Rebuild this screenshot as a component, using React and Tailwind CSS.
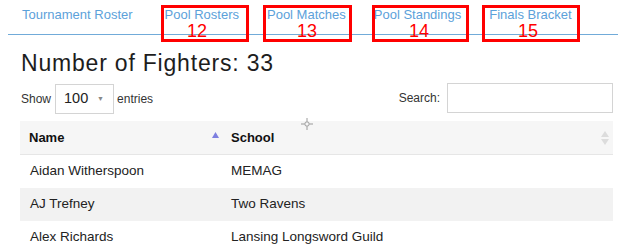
import React from 'react'

const tabs = ['Tournament Roster', 'Pool Rosters', 'Pool Matches', 'Pool Standings', 'Finals Bracket']

// annotation boxes drawn over the tabs
const marks = [
  { n: '12', box: 'left-[161px] w-[88px]', num: 'pl-[23px]' },
  { n: '13', box: 'left-[263px] w-[89px]', num: 'pl-[31px]' },
  { n: '14', box: 'left-[372px] w-[97px]', num: 'pl-[34px]' },
  { n: '15', box: 'left-[482px] w-[98px]', num: 'pl-[33px]' },
]

const rows = [
  { name: 'Aidan Witherspoon', school: 'MEMAG' },
  { name: 'AJ Trefney', school: 'Two Ravens' },
  { name: 'Alex Richards', school: 'Lansing Longsword Guild' },
]

export default function App() {
  return (
    <div className="relative w-[618px] h-[245px] overflow-hidden bg-white text-[#222] font-['Liberation_Sans',Arial,sans-serif]">
      {/* Tabs */}
      <div className="ml-[8px] flex h-[35px] items-start border-b border-[#71abd9]">
        {tabs.map((t, i) => (
          <div key={t} className={`pl-[14px] pt-[8px] text-[13px] leading-[14px] text-[#5ca1da] ${i === 0 ? 'pr-[18px]' : 'pr-[14px]'}`}>
            {t}
          </div>
        ))}
      </div>

      {marks.map(m => (
        <div key={m.n} className={`absolute top-[5px] h-[37px] border-[3px] border-[#ff0000] ${m.box}`}>
          <div className={`${m.num} pt-[16px] text-[18px] leading-[14px] text-[#ff0000]`}>
            {m.n}
          </div>
        </div>
      ))}

      {/* Heading */}
      <h1 className="ml-[21px] mt-[14px] text-[23px] leading-[28px] tracking-[0.8px] text-[#1d1d1d]">
        Number of Fighters: 33
      </h1>

      {/* Controls */}
      <div className="mt-[5px] ml-[21px] mr-[5px] flex items-center justify-between">
        <div className="flex items-center pt-[2px] text-[12px] text-[#333]">
          <span>Show</span>
          <div className="ml-[4px] mr-[3px] flex h-[30px] w-[59px] items-center justify-between border border-[#d4d4d4] pl-[8px] pr-[9px]">
            <span className="text-[14.5px] text-[#222]">100</span>
            <span className="text-[7px] text-[#888]">▼</span>
          </div>
          <span>entries</span>
        </div>
        <div className="flex items-center text-[12px] text-[#333]">
          <span className="mr-[7px]">Search:</span>
          <div className="h-[30px] w-[166px] border border-[#d4d4d4]" />
        </div>
      </div>

      {/* Table */}
      <div className="relative mt-[7px] ml-[20px] mr-[5px]">
        <div className="flex h-[34px] items-center border-b border-[#e6e6e6] bg-[#f6f6f6] text-[13px] font-bold text-[#111]">
          <div className="relative flex w-[202px] items-center pl-[9px]">
            Name
            <svg className="absolute right-[3px] top-[4px]" width="7" height="6" viewBox="0 0 7 6">
              <path d="M3.5 0 L7 6 L0 6 Z" fill="#7d7fe0" />
            </svg>
          </div>
          <div className="flex flex-1 items-center justify-between pl-[9px] pr-[4px]">
            School
            <svg width="8" height="14" viewBox="0 0 8 14">
              <path d="M4 0 L8 6 L0 6 Z" fill="#dcdcdc" />
              <path d="M4 14 L8 8 L0 8 Z" fill="#dcdcdc" />
            </svg>
          </div>
        </div>
        {rows.map((r, i) => (
          <div key={r.name} className={`flex h-[33px] items-center text-[13.5px] text-[#222] ${i % 2 === 1 ? 'bg-[#f2f2f2]' : 'bg-white'}`}>
            <div className="w-[202px] pl-[10px]">{r.name}</div>
            <div className="flex-1 pl-[9px]">{r.school}</div>
          </div>
        ))}

        {/* mouse cursor */}
        <svg className="absolute left-[281px] top-[-3px]" width="12" height="12" viewBox="0 0 12 12">
          <circle cx="6" cy="6" r="2.2" fill="none" stroke="#9a9a9a" strokeWidth="1" />
          <path d="M6 0 V3.5 M6 8.5 V12 M0 6 H3.5 M8.5 6 H12" stroke="#9a9a9a" strokeWidth="1" />
        </svg>
      </div>
    </div>
  )
}
